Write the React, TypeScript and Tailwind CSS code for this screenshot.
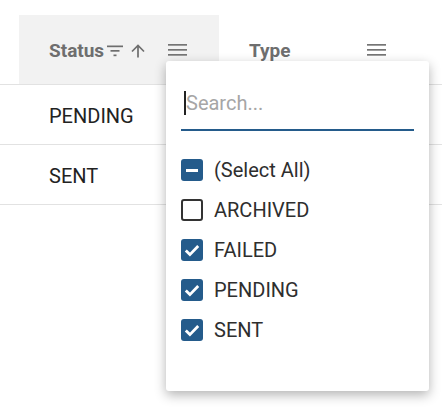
import React from "react";

const BLUE = "bg-[#245b8b]";

function FilterIcon() {
  return (
    <svg width="16" height="12" viewBox="0 0 16 12" className="text-[#6e6e6e]">
      <rect x="0" y="0.5" width="16" height="1.7" fill="currentColor" />
      <rect x="3.5" y="5" width="9" height="1.7" fill="currentColor" />
      <rect x="6.5" y="9.5" width="3" height="1.7" fill="currentColor" />
    </svg>
  );
}

function ArrowUp() {
  return (
    <svg width="16" height="14" viewBox="0 0 16 14" className="text-[#6e6e6e]">
      <path d="M8 13.5V1.5M2 7.5L8 1.5L14 7.5" stroke="currentColor" strokeWidth="1.7" fill="none" />
    </svg>
  );
}

function MenuIcon() {
  return (
    <svg width="19" height="12" viewBox="0 0 19 12" className="text-[#757575]">
      <rect x="0" y="0" width="19" height="1.7" fill="currentColor" />
      <rect x="0" y="5" width="19" height="1.7" fill="currentColor" />
      <rect x="0" y="10" width="19" height="1.7" fill="currentColor" />
    </svg>
  );
}

type CheckState = "checked" | "unchecked" | "partial";

function Checkbox({ state }: { state: CheckState }) {
  if (state === "unchecked") {
    return <div className="w-[22px] h-[22px] rounded-[3px] border-2 border-[#333333] bg-white" />;
  }
  return (
    <div className={`w-[22px] h-[22px] rounded-[3px] ${BLUE} flex items-center justify-center`}>
      {state === "partial" ? (
        <div className="w-[12px] h-[3px] bg-white" />
      ) : (
        <svg width="16" height="13" viewBox="0 0 16 13">
          <path d="M1.8 6.6L5.9 10.6L14.2 2" stroke="white" strokeWidth="2.8" fill="none" />
        </svg>
      )}
    </div>
  );
}

const items: { label: string; state: CheckState }[] = [
  { label: "(Select All)", state: "partial" },
  { label: "ARCHIVED", state: "unchecked" },
  { label: "FAILED", state: "checked" },
  { label: "PENDING", state: "checked" },
  { label: "SENT", state: "checked" },
];

export default function App() {
  return (
    <div
      className="relative w-[442px] h-[407px] bg-white overflow-hidden pt-[15px]"
      style={{ fontFamily: "Roboto, 'Liberation Sans', sans-serif" }}
    >
      {/* header */}
      <div className="flex h-[70px] border-b border-[#e2e2e2]">
        <div className="w-[19px]" />
        <div className="w-[200px] bg-[#f2f2f2] flex items-center pl-[30px] pr-[32px] pt-[3px]">
          <span className="text-[19px] font-bold text-[#6e6e6e]">Status</span>
          <span className="ml-[3px] flex"><FilterIcon /></span>
          <span className="ml-[7px] flex"><ArrowUp /></span>
          <span className="ml-auto flex mb-[3px]"><MenuIcon /></span>
        </div>
        <div className="w-[200px] flex items-center pl-[30px] pr-[33px] pt-[3px]">
          <span className="text-[19px] font-bold text-[#6e6e6e]">Type</span>
          <span className="ml-auto flex mb-[3px]"><MenuIcon /></span>
        </div>
      </div>

      {/* rows */}
      {["PENDING", "SENT"].map((v) => (
        <div key={v} className="flex h-[60px] border-b border-[#e2e2e2] items-center pt-[2px]">
          <div className="pl-[49px] text-[20px] text-[#222222]">{v}</div>
        </div>
      ))}

      {/* filter popup */}
      <div className="absolute left-[166px] top-[61px] w-[263px] h-[330px] bg-white rounded-[3px] shadow-[0_4px_12px_rgba(0,0,0,0.3)] px-[15px] pt-[15px]">
        <div className="h-[55px] border-b-2 border-[#245b8b] flex items-center">
          <div className="w-[1.5px] h-[24px] bg-[#222222] ml-[3px]" />
          <span className="text-[20px] text-[#a6a6a6] ml-[0.5px]">Search...</span>
        </div>
        <div className="mt-[19px] flex flex-col">
          {items.map((it) => (
            <div key={it.label} className="h-[40px] flex items-center gap-[11px]">
              <Checkbox state={it.state} />
              <span className="text-[20px] text-[#2e2e2e]">{it.label}</span>
            </div>
          ))}
        </div>
      </div>
    </div>
  );
}
